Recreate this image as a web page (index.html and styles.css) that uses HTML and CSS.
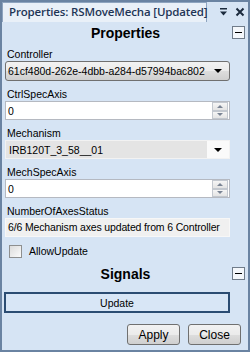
FILE: index.html
```html
<!DOCTYPE html>
<html>
<head>
<meta charset="utf-8">
<link rel="stylesheet" href="styles.css">
</head>
<body>
<div class="win">
  <div class="tabbar">
    <div class="tab">Properties: RSMoveMecha [Updated]</div>
    <div class="tabicons">
      <svg width="9" height="8" viewBox="0 0 9 8"><rect x="1" y="0" width="7" height="1.5" fill="#1b2a3d"/><path d="M1 3.5 H8 L4.5 7.5 Z" fill="#1b2a3d"/></svg>
      <svg width="10" height="10" viewBox="0 0 10 10"><path d="M1.5 1.5 L8.5 8.5 M8.5 1.5 L1.5 8.5" stroke="#1b2a3d" stroke-width="2"/></svg>
    </div>
  </div>
  <div class="content">
    <div class="header"><span class="htext">Properties</span><span class="collapse"><span class="minus"></span></span></div>

    <div class="field first">
      <div class="label">Controller</div>
      <div class="combo"><span class="ctext">61cf480d-262e-4dbb-a284-d57994bac802</span><span class="arrow"></span></div>
    </div>

    <div class="field">
      <div class="label">CtrlSpecAxis</div>
      <div class="numeric"><span class="ntext">0</span><span class="spin"><span class="sbtn"><span class="up"></span></span><span class="sbtn"><span class="dn"></span></span></span></div>
    </div>

    <div class="field">
      <div class="label">Mechanism</div>
      <div class="flatcombo"><span class="fctext">IRB120T_3_58__01</span><span class="farrow"><span class="arrow"></span></span></div>
    </div>

    <div class="field">
      <div class="label">MechSpecAxis</div>
      <div class="numeric"><span class="ntext">0</span><span class="spin"><span class="sbtn"><span class="up"></span></span><span class="sbtn"><span class="dn"></span></span></span></div>
    </div>

    <div class="field">
      <div class="label">NumberOfAxesStatus</div>
      <div class="readonly">6/6 Mechanism axes updated from 6 Controller</div>
    </div>

    <div class="checkrow">
      <span class="checkbox"></span><span class="clabel">AllowUpdate</span>
    </div>

    <div class="header signals"><span class="htext">Signals</span><span class="collapse"><span class="minus"></span></span></div>

    <div class="updatebar">Update</div>

    <div class="buttons">
      <div class="btn">Apply</div>
      <div class="btn">Close</div>
    </div>
  </div>
</div>
</body>
</html>
```

FILE: styles.css
```css
* { box-sizing: border-box; }
html, body { margin: 0; padding: 0; }
body { width: 250px; height: 352px; overflow: hidden; font-family: "Liberation Sans", Arial, sans-serif; font-size: 10.5px; color: #000; }
.win { width: 250px; height: 352px; background: #d6e4f4; border: 2px solid #6a83a2; display: flex; flex-direction: column; }
.tabbar { height: 20px; display: flex; align-items: flex-end; background: #d6e4f4; }
.tab { height: 20px; width: 205px; background: #e9f0f8; border: 1px solid #8ea4bf; border-bottom: none; font-family: "Open Sans", sans-serif; font-weight: 600; font-size: 11.5px; color: #1e3556; line-height: 18px; padding-left: 6px; white-space: nowrap; letter-spacing: -0.15px; }
.tabicons { flex: 1; display: flex; align-items: center; justify-content: flex-end; gap: 7px; height: 20px; padding-right: 3px; }
.content { flex: 1; display: flex; flex-direction: column; padding: 0 2px 0 3px; }
.header { height: 22px; display: flex; align-items: center; justify-content: center; position: relative; }
.htext { font-weight: bold; font-size: 14px; color: #000; }
.collapse { position: absolute; right: 1px; top: 4px; width: 13px; height: 13px; border: 1px solid #707c8a; background: #f4f7fb; display: flex; align-items: center; justify-content: center; }
.minus { width: 7px; height: 1px; background: #000; }
.field { margin-top: 7px; }
.field.first { margin-top: 4px; }
.label { line-height: 13px; height: 13px; padding-left: 2px; color: #000; }
.combo { width: 225px; height: 20px; border: 1px solid #707070; border-radius: 3px; background: linear-gradient(#f2f2f2, #ebebeb 50%, #dddddd 51%, #cfcfcf); display: flex; align-items: center; justify-content: space-between; padding: 0 7px 0 2px; }
.ctext { white-space: nowrap; }
.arrow { width: 0; height: 0; border-left: 4px solid transparent; border-right: 4px solid transparent; border-top: 4px solid #000; }
.numeric { width: 225px; height: 19px; background: #fff; border: 1px solid #b5b9c1; display: flex; align-items: center; justify-content: space-between; }
.ntext { padding-left: 2px; }
.spin { display: flex; flex-direction: column; width: 16px; height: 17px; margin-right: 1px; }
.sbtn { flex: 1; border: 1px solid #c3c8cf; background: linear-gradient(#f5f5f5, #e4e4e4); display: flex; align-items: center; justify-content: center; }
.up { width: 0; height: 0; border-left: 3px solid transparent; border-right: 3px solid transparent; border-bottom: 3px solid #7a8494; }
.dn { width: 0; height: 0; border-left: 3px solid transparent; border-right: 3px solid transparent; border-top: 3px solid #7a8494; }
.flatcombo { width: 225px; height: 19px; border: 1px solid #f2f2f2; background: #e4e4e4; display: flex; align-items: center; }
.fctext { flex: 1; padding-left: 3px; white-space: nowrap; }
.farrow { width: 22px; height: 17px; background: #fafafa; display: flex; align-items: center; justify-content: center; }
.readonly { width: 225px; height: 19px; background: #f0f0f0; border: 1px solid #f7f7f7; padding-left: 2px; line-height: 17px; white-space: nowrap; overflow: hidden; letter-spacing: -0.15px; }
.checkrow { margin-top: 7px; height: 14px; display: flex; align-items: center; padding-left: 4px; }
.checkbox { width: 13px; height: 13px; border: 1px solid #8e8f8f; background: linear-gradient(135deg, #dcdcdc, #fbfbfb); }
.clabel { margin-left: 7px; }
.header.signals { margin-top: 5px; }
.updatebar { margin-top: 7px; width: 226px; margin-left: -1px; height: 21px; border: 2px solid #2b4c72; background: #d8e6f6; display: flex; align-items: center; justify-content: center; }
.buttons { margin-top: 11px; display: flex; justify-content: flex-end; gap: 8px; padding-right: 5px; }
.btn { width: 53px; height: 21px; border: 1px solid #707070; border-radius: 3px; background: linear-gradient(#f2f2f2, #ebebeb 50%, #dddddd 51%, #cfcfcf); display: flex; align-items: center; justify-content: center; font-size: 12px; }
```
